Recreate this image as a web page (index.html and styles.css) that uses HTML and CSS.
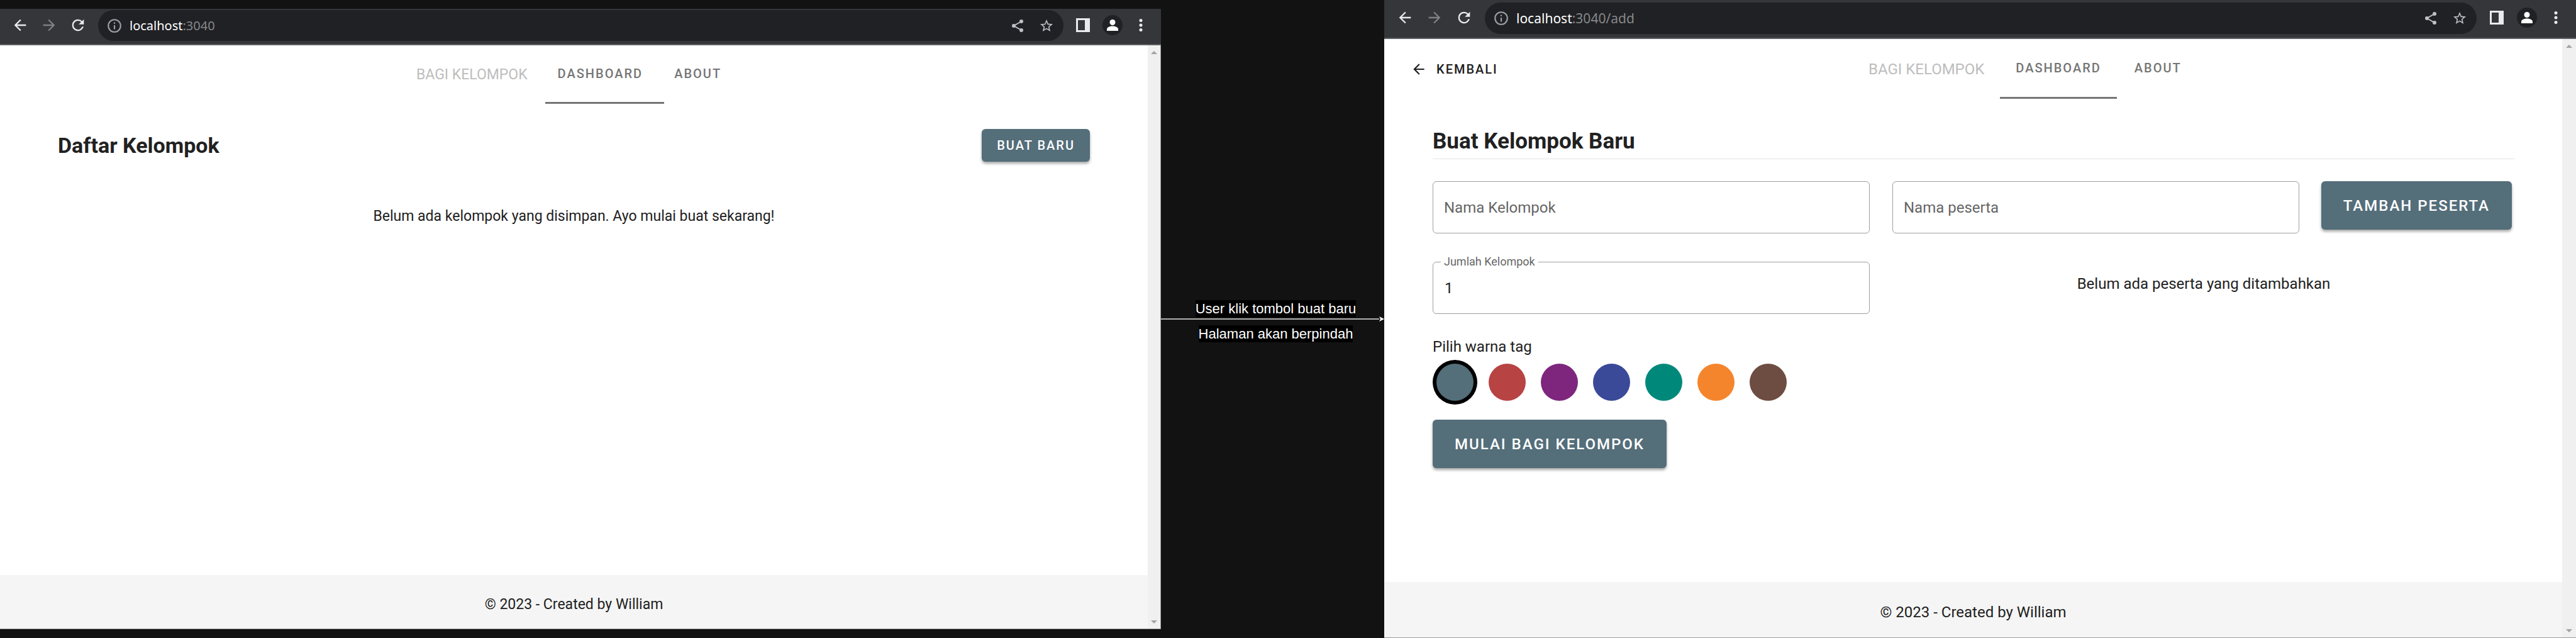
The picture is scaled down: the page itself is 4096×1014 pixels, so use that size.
FILE: index.html
```html
<!DOCTYPE html>
<html lang="id">
<head>
<meta charset="utf-8">
<title>Bagi Kelompok</title>
<link rel="stylesheet" href="styles.css">
</head>
<body>
<svg class="sprite" aria-hidden="true">
  <symbol id="i-back" viewBox="0 0 24 24"><path d="M20 11H7.83l5.59-5.59L12 4l-8 8 8 8 1.41-1.41L7.83 13H20v-2z"/></symbol>
  <symbol id="i-forward" viewBox="0 0 24 24"><path d="M12 4l-1.41 1.41L16.17 11H4v2h12.17l-5.58 5.59L12 20l8-8z"/></symbol>
  <symbol id="i-reload" viewBox="0 0 24 24"><path d="M17.65 6.35A7.96 7.96 0 0 0 12 4a8 8 0 1 0 7.73 10h-2.08A6 6 0 1 1 12 6c1.66 0 3.14.69 4.22 1.78L13 11h7V4l-2.35 2.35z"/></symbol>
  <symbol id="i-info" viewBox="0 0 24 24"><path d="M11 7h2v2h-2zm0 4h2v6h-2zm1-9a10 10 0 1 0 0 20 10 10 0 0 0 0-20zm0 18a8 8 0 1 1 0-16 8 8 0 0 1 0 16z"/></symbol>
  <symbol id="i-share" viewBox="0 0 24 24"><path d="M18 5L6 12l12 7" fill="none" stroke="currentColor" stroke-width="2"/><circle cx="18" cy="5" r="3"/><circle cx="6" cy="12" r="3"/><circle cx="18" cy="19" r="3"/></symbol>
  <symbol id="i-star" viewBox="0 0 24 24"><path d="M22 9.24l-7.19-.62L12 2 9.19 8.63 2 9.24l5.46 4.73L5.82 21 12 17.27 18.18 21l-1.63-7.03L22 9.24zM12 15.4l-3.76 2.27 1-4.28-3.32-2.88 4.38-.38L12 6.1l1.71 4.04 4.38.38-3.32 2.88 1 4.28L12 15.4z"/></symbol>
  <symbol id="i-panel" viewBox="0 0 22 22"><path fill-rule="evenodd" d="M0 0h22v22H0zM3 3v16h11V3z"/></symbol>
  <symbol id="i-avatar" viewBox="0 0 32 32"><circle cx="16" cy="16" r="16" fill="#202124"/><circle cx="16" cy="11.500" r="4.500"/><path d="M7 25v-2.500c0-3.500 5-5 9-5s9 1.500 9 5V25z"/></symbol>
  <symbol id="i-dots" viewBox="0 0 24 24"><circle cx="12" cy="6" r="2"/><circle cx="12" cy="12" r="2"/><circle cx="12" cy="18" r="2"/></symbol>
  <symbol id="i-up" viewBox="0 0 10 5"><path d="M0 5l5-5 5 5z"/></symbol>
  <symbol id="i-down" viewBox="0 0 10 5"><path d="M0 0l5 5 5-5z"/></symbol>
</svg>

<div class="flow">
  <section class="window window--home">
    <div class="toolbar">
      <div class="toolbar__nav">
        <button class="tool" aria-label="Back"><svg><use href="#i-back"/></svg></button>
        <button class="tool tool--off" aria-label="Forward"><svg><use href="#i-forward"/></svg></button>
        <button class="tool" aria-label="Reload"><svg><use href="#i-reload"/></svg></button>
      </div>
      <div class="address">
        <svg class="address__info"><use href="#i-info"/></svg>
        <span class="address__url">localhost<span class="address__path">:3040</span></span>
        <button class="address__action" aria-label="Share"><svg><use href="#i-share"/></svg></button>
        <button class="address__action" aria-label="Bookmark"><svg><use href="#i-star"/></svg></button>
      </div>
      <div class="toolbar__end">
        <button class="tool tool--panel" aria-label="Side panel"><svg><use href="#i-panel"/></svg></button>
        <button class="tool tool--avatar" aria-label="Profile"><svg><use href="#i-avatar"/></svg></button>
        <button class="tool tool--dots" aria-label="Menu"><svg><use href="#i-dots"/></svg></button>
      </div>
    </div>
    <div class="viewport">
      <div class="page">
        <header class="header">
          <nav class="tabs">
            <span class="brand">BAGI KELOMPOK</span>
            <a class="tab tab--active" href="#dashboard">DASHBOARD</a>
            <a class="tab" href="#about">ABOUT</a>
          </nav>
        </header>
        <main class="home">
          <div class="home__head">
            <h1 class="title">Daftar Kelompok</h1>
            <button class="btn btn--small">BUAT BARU</button>
          </div>
          <p class="home__empty">Belum ada kelompok yang disimpan. Ayo mulai buat sekarang!</p>
        </main>
        <footer class="footer">© 2023 - Created by William</footer>
      </div>
      <div class="scrollbar">
        <svg><use href="#i-up"/></svg>
        <svg><use href="#i-down"/></svg>
      </div>
    </div>
  </section>

  <div class="step">
    <p class="step__label step__label--above"><span>User klik tombol buat baru</span></p>
    <div class="step__arrow"><svg viewBox="0 0 8 8"><path d="M0 0l8 4-8 4 2-4z"/></svg></div>
    <p class="step__label"><span>Halaman akan berpindah</span></p>
  </div>

  <section class="window window--add">
    <div class="toolbar">
      <div class="toolbar__nav">
        <button class="tool" aria-label="Back"><svg><use href="#i-back"/></svg></button>
        <button class="tool tool--off" aria-label="Forward"><svg><use href="#i-forward"/></svg></button>
        <button class="tool" aria-label="Reload"><svg><use href="#i-reload"/></svg></button>
      </div>
      <div class="address">
        <svg class="address__info"><use href="#i-info"/></svg>
        <span class="address__url">localhost<span class="address__path">:3040/add</span></span>
        <button class="address__action" aria-label="Share"><svg><use href="#i-share"/></svg></button>
        <button class="address__action" aria-label="Bookmark"><svg><use href="#i-star"/></svg></button>
      </div>
      <div class="toolbar__end">
        <button class="tool tool--panel" aria-label="Side panel"><svg><use href="#i-panel"/></svg></button>
        <button class="tool tool--avatar" aria-label="Profile"><svg><use href="#i-avatar"/></svg></button>
        <button class="tool tool--dots" aria-label="Menu"><svg><use href="#i-dots"/></svg></button>
      </div>
    </div>
    <div class="viewport">
      <div class="page">
        <header class="header">
          <a class="back" href="#back"><svg><use href="#i-back"/></svg>KEMBALI</a>
          <nav class="tabs">
            <span class="brand">BAGI KELOMPOK</span>
            <a class="tab tab--active" href="#dashboard">DASHBOARD</a>
            <a class="tab" href="#about">ABOUT</a>
          </nav>
        </header>
        <main class="add">
          <h1 class="title add__title">Buat Kelompok Baru</h1>
          <form class="form">
            <div class="form__group">
              <div class="field">
                <input class="field__input" id="group-name" type="text">
                <label class="field__label" for="group-name">Nama Kelompok</label>
              </div>
              <div class="field field--filled">
                <input class="field__input" id="group-count" type="text" inputmode="numeric" value="1">
                <label class="field__label" for="group-count">Jumlah Kelompok</label>
              </div>
              <fieldset class="colors">
                <legend class="colors__legend">Pilih warna tag</legend>
                <div class="colors__list">
                  <input class="color color--slate" type="radio" name="color" aria-label="Abu-abu" checked>
                  <input class="color color--red" type="radio" name="color" aria-label="Merah">
                  <input class="color color--purple" type="radio" name="color" aria-label="Ungu">
                  <input class="color color--indigo" type="radio" name="color" aria-label="Biru">
                  <input class="color color--teal" type="radio" name="color" aria-label="Hijau">
                  <input class="color color--orange" type="radio" name="color" aria-label="Oranye">
                  <input class="color color--brown" type="radio" name="color" aria-label="Cokelat">
                </div>
              </fieldset>
              <button class="btn form__submit" type="button">MULAI BAGI KELOMPOK</button>
            </div>
            <div class="form__members">
              <div class="form__row">
                <div class="field">
                  <input class="field__input" id="member-name" type="text">
                  <label class="field__label" for="member-name">Nama peserta</label>
                </div>
                <button class="btn" type="button">TAMBAH PESERTA</button>
              </div>
              <p class="form__empty">Belum ada peserta yang ditambahkan</p>
            </div>
          </form>
        </main>
        <footer class="footer">© 2023 - Created by William</footer>
      </div>
      <div class="scrollbar">
        <svg><use href="#i-up"/></svg>
        <svg><use href="#i-down"/></svg>
      </div>
    </div>
  </section>
</div>
</body>
</html>
```
FILE: styles.css
```css
* { box-sizing: border-box; }

body {
  margin: 0;
  background: #121212;
  color: #212121;
  font-family: Roboto, sans-serif;
}

h1, p { margin: 0; }

button, input { font: inherit; }

svg {
  display: block;
  fill: currentColor;
}

.sprite {
  position: absolute;
  width: 0;
  height: 0;
}

.flow {
  display: grid;
  grid-template-columns: 1846fr 355fr 1895fr;
  min-height: 100vh;
}

/* Browser windows */
.window {
  display: flex;
  flex-direction: column;
  min-width: 0;
  background: #fff;
  border-bottom: 1px solid #9a9a9a;
}

.window--home {
  --text: 23px;
  --title: 34px;
  --url: 20px;
  --gap: 18px;
  --end-gap: 20px;
  --bar: 49px;
  --bar-top: 2px;
  --bar-bottom: 5px;
  --header: 93px;
  --scroll: 20px;
  --tab: 20px;
  --footer: 85px;
  margin: 14px 0;
}

.window--add {
  --text: 24px;
  --title: 35px;
  --url: 21px;
  --gap: 19px;
  --end-gap: 21px;
  --bar: 50px;
  --bar-top: 4px;
  --bar-bottom: 6px;
  --header: 95px;
  --scroll: 22px;
  --tab: 25px;
  --footer: 88px;
}

.toolbar {
  display: flex;
  gap: var(--gap);
  padding: var(--bar-top) 17px var(--bar-bottom) var(--gap);
  background: #35363a;
  border-bottom: 2px solid #5f6063;
  color: #e8eaed;
}

.toolbar__nav,
.toolbar__end {
  display: flex;
  align-items: center;
  padding-bottom: 2px;
}

.toolbar__nav { gap: var(--gap); }

.toolbar__end {
  gap: var(--end-gap);
  padding-left: 2px;
}

.tool,
.address__action {
  padding: 0;
  border: 0;
  background: none;
  color: inherit;
}

.tool svg {
  width: 28px;
  height: 28px;
}

.tool--off { color: #7f8083; }

.tool--panel svg {
  width: 22px;
  height: 22px;
}

.tool--avatar { color: #fff; }

.tool--avatar svg {
  width: 32px;
  height: 32px;
}

.tool--dots { margin-left: -6px; }

.tool--dots svg {
  width: 30px;
  height: 30px;
}

.address {
  display: flex;
  flex: 1;
  align-items: center;
  gap: 22px;
  height: var(--bar);
  padding: 0 15px 0 13px;
  border-radius: 25px;
  background: #202124;
  color: #bdc1c6;
}

.address__info {
  width: 26px;
  height: 26px;
  margin-right: -11px;
  color: #9aa0a6;
}

.address__url {
  flex: 1;
  color: #fff;
  font-family: "Noto Sans", sans-serif;
  font-size: var(--url);
}

.address__path { color: #85878a; }

.address__action svg {
  width: 24px;
  height: 24px;
}

.viewport {
  display: flex;
  flex: 1;
}

.window--home .viewport { border-right: 1px solid #9a9a9a; }

.page {
  display: flex;
  flex: 1;
  flex-direction: column;
  font-size: var(--text);
}

.scrollbar {
  display: flex;
  flex-direction: column;
  justify-content: space-between;
  align-items: center;
  width: var(--scroll);
  padding: 9px 0 8px;
  background: #f0f0f0;
  color: #a3a3a3;
}

.scrollbar svg {
  width: 10px;
  height: 5px;
}

/* App header */
.header {
  display: flex;
  height: var(--header);
}

.tabs {
  display: flex;
  flex: 1;
  justify-content: center;
}

.brand {
  align-self: center;
  padding-right: 25px;
  color: #bdbdbd;
}

.window--home .brand { padding-right: 28px; }

.tab {
  display: flex;
  align-items: center;
  padding: 0 var(--tab);
  border-bottom: 3px solid transparent;
  color: #757575;
  font-size: 20px;
  font-weight: 500;
  letter-spacing: 2px;
  text-decoration: none;
}

.tab--active { border-color: #757575; }

.window--home .tab--active { padding-right: 34px; }

.tab:last-child { padding: 0 20px 0 28px; }

.window--home .tab:last-child { padding: 0 16px; }

.back {
  display: flex;
  align-items: center;
  gap: 15px;
  padding: 0 4px 0 42px;
  color: #212121;
  font-size: 20px;
  font-weight: 500;
  letter-spacing: 2px;
  text-decoration: none;
}

.back svg {
  width: 26px;
  height: 26px;
}

.title {
  font-size: var(--title);
  font-weight: 700;
  line-height: 48px;
}

.btn {
  height: 77px;
  padding: 0 35px;
  border: 0;
  border-radius: 6px;
  background: #546e7a;
  box-shadow: 0 3px 4px rgba(0, 0, 0, 0.35);
  color: #fff;
  font-size: 24px;
  font-weight: 500;
  letter-spacing: 2px;
  white-space: nowrap;
}

.btn--small {
  height: 52px;
  padding: 0 24px;
  font-size: 20px;
}

.footer {
  display: flex;
  align-items: center;
  justify-content: center;
  height: var(--footer);
  padding-top: 8px;
  background: #f5f5f5;
}

/* Group list */
.home {
  flex: 1;
  padding: 40px 92px;
}

.home__head {
  display: flex;
  align-items: center;
  justify-content: space-between;
}

.home__empty {
  margin-top: 69px;
  line-height: 36px;
  text-align: center;
}

/* New group form */
.add {
  flex: 1;
  padding: 44px 75px 44px 77px;
}

.add__title {
  padding-bottom: 3px;
  border-bottom: 1px solid #e4e4e4;
}

.form {
  display: grid;
  grid-template-columns: 695fr 990fr;
  gap: 36px;
  margin-top: 35px;
}

.form__group {
  display: flex;
  flex-direction: column;
  align-items: stretch;
}

.field {
  position: relative;
  flex: 1;
}

.field__input {
  display: block;
  width: 100%;
  height: 83px;
  padding: 0 18px;
  border: 1px solid #9e9e9e;
  border-radius: 6px;
  background: none;
  color: #212121;
}

.field__label {
  position: absolute;
  top: 24px;
  left: 18px;
  color: #666;
  line-height: 36px;
}

.field--filled { margin-top: 45px; }

.field--filled .field__label {
  top: -12px;
  left: 13px;
  padding: 0 5px;
  background: #fff;
  font-size: 18px;
  line-height: 24px;
}

.colors {
  min-width: 0;
  margin: 34px 0 0;
  padding: 0;
  border: 0;
}

.colors__legend {
  padding: 0;
  line-height: 36px;
}

.colors__list {
  display: flex;
  gap: 24px;
  padding: 9px 6px 6px;
}

.color {
  width: 59px;
  height: 59px;
  margin: 0;
  border-radius: 50%;
  appearance: none;
}

.color:checked { box-shadow: 0 0 0 6px #000; }

.color--slate { background: #546e7a; }
.color--red { background: #b74343; }
.color--purple { background: #7e267d; }
.color--indigo { background: #3a4a99; }
.color--teal { background: #00897b; }
.color--orange { background: #f5852c; }
.color--brown { background: #6d4c41; }

.form__submit {
  align-self: flex-start;
  margin-top: 24px;
}

.form__row {
  display: flex;
  align-items: flex-start;
  gap: 35px;
  padding-right: 5px;
}

.form__empty {
  margin-top: 62px;
  line-height: 36px;
  text-align: center;
}

/* Transition between the two windows */
.step {
  display: grid;
  grid-template-rows: 1fr auto 1fr;
  color: #fff;
  font-family: "Liberation Sans", sans-serif;
  font-size: 22px;
  line-height: 27px;
}

.step__label {
  padding: 9px 0 0 10px;
  text-align: center;
}

.step__label span {
  display: inline-block;
  background: #000;
}

.step__label--above {
  align-self: end;
  padding: 0 0 2px 10px;
}

.step__arrow {
  display: flex;
  align-items: center;
  height: 2px;
}

.step__arrow::before {
  content: "";
  flex: 1;
  height: 2px;
  background: #b0b0b0;
}

.step__arrow svg {
  width: 8px;
  height: 8px;
}
```
